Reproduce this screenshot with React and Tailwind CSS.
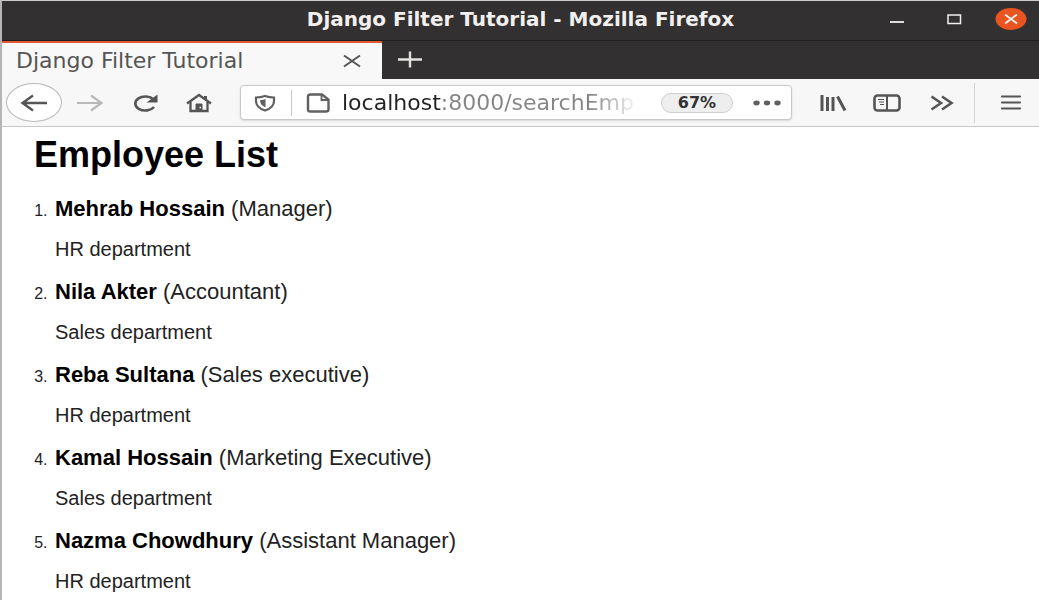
import React, { useState } from 'react';

const employees = [
  { name: 'Mehrab Hossain', post: 'Manager', department: 'HR department' },
  { name: 'Nila Akter', post: 'Accountant', department: 'Sales department' },
  { name: 'Reba Sultana', post: 'Sales executive', department: 'HR department' },
  { name: 'Kamal Hossain', post: 'Marketing Executive', department: 'Sales department' },
  { name: 'Nazma Chowdhury', post: 'Assistant Manager', department: 'HR department' }
];

const TitleBar = () => (
  <header className="flex h-10 items-center border-b border-[#1f1d1d] bg-[#333031] pb-1 text-[#f2f0ee]">
    <div className="w-[171px] shrink-0" />
    <h1 className="min-w-0 flex-1 truncate text-center text-xl leading-7 font-bold">
      Django Filter Tutorial - Mozilla Firefox
    </h1>
    <div className="flex w-[171px] shrink-0">
      <button type="button" aria-label="Minimize" className="flex flex-1 justify-center">
        <svg width="32" height="24" fill="none" stroke="currentColor" strokeWidth="1.8">
          <path d="M9 15h14" />
        </svg>
      </button>
      <button type="button" aria-label="Maximize" className="flex flex-1 justify-center">
        <svg width="32" height="24" fill="none" stroke="currentColor" strokeWidth="1.5">
          <rect x="10" y="8" width="12.500" height="8.500" />
        </svg>
      </button>
      <button type="button" aria-label="Close window" className="flex flex-1 justify-center">
        <svg width="32" height="24" fill="none">
          <ellipse cx="16" cy="12" rx="15.5" ry="11" fill="#e95420" />
          <path d="M10 7.500l12 9M22 7.500l-12 9" stroke="currentColor" strokeWidth="1.8" />
        </svg>
      </button>
    </div>
  </header>
);

const TabStrip = () => (
  <div className="flex h-[38px] bg-[#333031]">
    <div className="flex w-[380px] items-center border-t-2 border-[#e2582f] bg-[#f8f8f8] pr-3 pl-3.5 text-[#555]">
      <span className="min-w-0 flex-1 truncate text-[22px] leading-7">Django Filter Tutorial</span>
      <button type="button" aria-label="Close tab" className="flex w-9 justify-center">
        <svg width="20" height="16" fill="none" stroke="currentColor" strokeWidth="2">
          <path d="M2 2.500l16 11M18 2.500L2 13.500" />
        </svg>
      </button>
    </div>
    <button type="button" aria-label="New tab" className="flex w-14 items-center justify-center text-[#e4e2e0]">
      <svg width="26" height="20" fill="none" stroke="currentColor" strokeWidth="2.4">
        <path d="M1 9.500h24M13 1.500v16" />
      </svg>
    </button>
  </div>
);

const AddressBar = () => {
  const [url, setUrl] = useState('localhost:8000/searchEmp');

  return (
    <div className="flex h-[35px] min-w-0 flex-1 items-center rounded border border-[#c8c8c8] bg-white pr-0.5 pl-3 text-[#606060] shadow-sm">
      <svg className="shrink-0" width="24" height="20" fill="none" stroke="currentColor" strokeWidth="2.200">
        <path d="M3 4.500c3.500 0 6-.5 9-1.500 3 1 5.500 1.500 9 1.500v3.500c0 5-3.500 7.700-9 9.500-5.500-1.800-9-4.500-9-9.500z" />
        <path d="M12.500 6c-1.800.6-3.200.9-5.500 1 0 3.500 1.800 5.700 5.500 7.500z" fill="currentColor" stroke="none" />
      </svg>
      <div className="mx-3.5 h-[26px] w-px shrink-0 bg-[#c6c6c6]" />
      <svg className="shrink-0" width="26" height="22" fill="none" stroke="currentColor" strokeWidth="2.400">
        <path d="M4.500 2.500h11.500l6.500 5v10q0 2-2.500 2h-15.500q-2.500 0-2.500-2v-13q0-2 2.500-2z" />
        <path d="M15.500 2.500v5.500h7" strokeWidth="1.800" />
      </svg>
      <input
        type="text"
        aria-label="Address"
        value={url}
        onChange={(e) => setUrl(e.target.value)}
        className="ml-2.5 min-w-0 flex-1 bg-[linear-gradient(to_right,#222_99px,#858585_99px,#858585_248px,transparent_298px)] bg-clip-text text-[22px] leading-7 text-transparent caret-black outline-none"
      />
      <button type="button" className="ml-2 h-5 w-[72px] shrink-0 rounded-full border border-[#cfcfcf] bg-[#eee] text-base leading-4 font-bold text-[#333]">
        67%
      </button>
      <button type="button" aria-label="Page actions" className="ml-3 flex w-11 shrink-0 justify-center">
        <svg width="30" height="10" fill="currentColor">
          <ellipse cx="4.500" cy="5" rx="3.200" ry="2.400" />
          <ellipse cx="15" cy="5" rx="3.200" ry="2.400" />
          <ellipse cx="25.500" cy="5" rx="3.200" ry="2.400" />
        </svg>
      </button>
    </div>
  );
};

const Toolbar = () => (
  <nav className="flex h-12 items-center border-b border-[#c9c9c9] bg-[#f7f7f7] pl-1 text-[#555]">
    <button type="button" aria-label="Back" className="flex h-[39px] w-14 items-center justify-center rounded-[50%] border border-[#b9b9b9] bg-white">
      <svg width="28" height="20" fill="none" stroke="currentColor" strokeWidth="2.400">
        <path d="M27 10H3M13 2.500L2.500 10 13 17.500" />
      </svg>
    </button>
    <button type="button" aria-label="Forward" className="flex w-14 justify-center text-[#b8b8b8]">
      <svg width="28" height="20" fill="none" stroke="currentColor" strokeWidth="2.200">
        <path d="M1 10h24M15 2.500L25.500 10 15 17.500" />
      </svg>
    </button>
    <button type="button" aria-label="Reload" className="flex w-[54px] justify-center">
      <svg width="28" height="20" fill="none" stroke="currentColor" strokeWidth="2.600">
        <path d="M23 14A10 7 0 1 1 22.500 6.500" />
        <path d="M26.500 1.500v8h-11z" fill="currentColor" stroke="none" />
      </svg>
    </button>
    <button type="button" aria-label="Home" className="mr-3.5 flex w-[54px] justify-center">
      <svg width="28" height="20" fill="none" stroke="currentColor" strokeWidth="2.300">
        <path d="M2 10.500L14 2l12 8.500" />
        <path d="M5.500 9v9h17V9" />
        <path d="M20.500 3v3" strokeWidth="3" />
        <path d="M11 18v-7h6v7z" fill="currentColor" strokeWidth="1" />
        <path d="M14.500 14.500h1.500" stroke="#eee" strokeWidth="1.500" />
      </svg>
    </button>
    <AddressBar />
    <button type="button" aria-label="Library" className="ml-3.5 flex w-[54px] justify-center">
      <svg width="28" height="20" fill="none" stroke="currentColor" strokeWidth="3">
        <path d="M3 2v16M8.500 4v14M14 4v14M18.500 3.500l7.500 14" />
      </svg>
    </button>
    <button type="button" aria-label="Sidebars" className="flex w-[54px] justify-center">
      <svg width="28" height="20" fill="none" stroke="currentColor">
        <rect x="1.500" y="2.500" width="25" height="15" rx="3" strokeWidth="2.600" />
        <path d="M14 3v14" strokeWidth="2" />
        <path d="M5 6.500h6M6 9h5M7 11.500h4" strokeWidth="1.200" />
      </svg>
    </button>
    <button type="button" aria-label="More tools" className="flex w-14 justify-center">
      <svg width="24" height="20" fill="none" stroke="currentColor" strokeWidth="2.600">
        <path d="M1.500 3.500L11 10l-9.500 6.500M12 3.500l9.500 6.500-9.500 6.500" />
      </svg>
    </button>
    <div className="mr-2 ml-1 h-10 w-px bg-[#d4d4d4]" />
    <button type="button" aria-label="Open menu" className="flex w-14 justify-center">
      <svg width="22" height="20" fill="none" stroke="currentColor" strokeWidth="2.200" strokeLinecap="round">
        <path d="M2 3.500h18M2 9.500h18M2 15.500h18" />
      </svg>
    </button>
  </nav>
);

const EmployeeList = () => (
  <main className="px-8 pt-2 font-['Liberation_Sans',Arial,sans-serif] text-black">
    <h2 className="text-4xl leading-10 font-bold">Employee List</h2>
    <ol className="mt-[22px] list-decimal space-y-[19px] pl-[18px]">
      {employees.map((employee) => (
        <li key={employee.name} className="pl-[3px] text-[#222] marker:text-base">
          <p className="text-[22px] leading-6">
            <b className="text-black">{employee.name}</b> ({employee.post})
          </p>
          <p className="mt-4 text-xl leading-6">{employee.department}</p>
        </li>
      ))}
    </ol>
  </main>
);

const App = () => (
  <div className="min-h-screen border-t border-l-2 border-t-[#ccc] border-l-[#b5b5b5] bg-white font-['DejaVu_Sans',sans-serif]">
    <TitleBar />
    <TabStrip />
    <Toolbar />
    <EmployeeList />
  </div>
);

export default App;
